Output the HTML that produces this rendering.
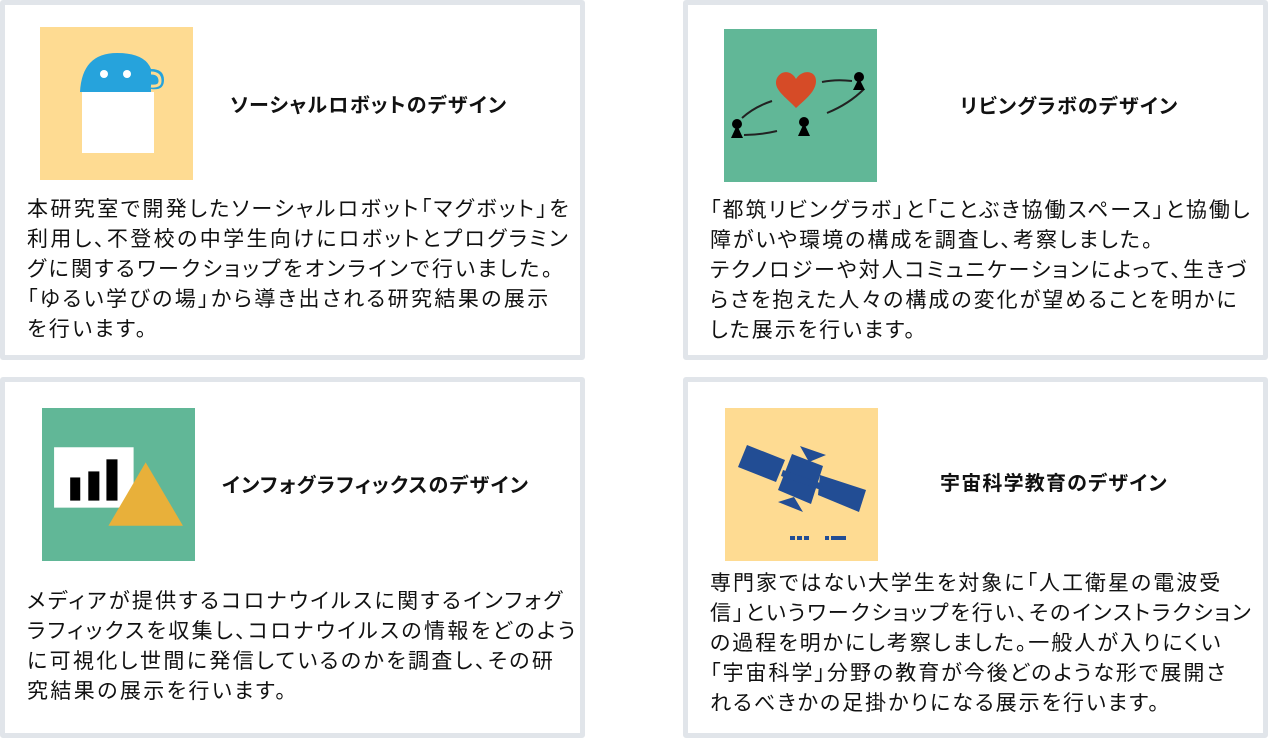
<!DOCTYPE html>
<html><head><meta charset="utf-8"><style>
body{margin:0;width:1268px;height:738px;background:#fff;position:relative;overflow:hidden;font-family:"Liberation Sans","Noto Sans CJK JP",sans-serif;color:#111}
.card{position:absolute;box-sizing:border-box;border:5px solid #e1e5ea;border-radius:3px;background:#fff}
.img{position:absolute;width:153px;height:153px}
.t{position:absolute;font-weight:bold;font-size:20px;letter-spacing:1.2px;white-space:nowrap;line-height:24px;font-feature-settings:"palt"}
.b{position:absolute;font-size:21px;letter-spacing:2.4px;line-height:30px;white-space:nowrap;font-feature-settings:"palt"}
</style></head><body>
<div class="card" style="left:0;top:0;width:585px;height:360px"></div>
<div class="card" style="left:683px;top:0;width:585px;height:360px"></div>
<div class="card" style="left:0;top:377px;width:585px;height:361px"></div>
<div class="card" style="left:683px;top:377px;width:585px;height:361px"></div>

<svg class="img" style="left:40px;top:27px" viewBox="0 0 153 153"><rect width="153" height="153" fill="#fedb92"/><path d="M40 65 Q42 26 77 26 Q105 26 111 42 Q124 42 124 53 Q124 64 111 62 L111 65 Z" fill="#26a3dc"/><path d="M111 46 Q120 46 120 54 Q120 60 111 59" fill="none" stroke="#fedb92" stroke-width="3"/><circle cx="64" cy="47" r="4" fill="#fff"/><circle cx="87" cy="47" r="4" fill="#fff"/><rect x="42" y="65" width="72" height="61" fill="#fff"/></svg>
<div class="t" style="left:230px;top:94px">ソーシャルロボットのデザイン</div>
<div class="b" style="left:27px;top:195px">本研究室で開発したソーシャルロボット「マグボット」を<br>利用し、不登校の中学生向けにロボットとプログラミン<br>グに関するワークショップをオンラインで行いました。<br>「ゆるい学びの場」から導き出される研究結果の展示<br>を行います。</div>

<svg class="img" style="left:724px;top:29px" viewBox="0 0 153 153"><rect width="153" height="153" fill="#61b797"/><path d="M72 79 C62 68 48 60 53 49 C58 40 68 42 72 50 C78 40 92 41 92 52 C92 62 82 70 72 79Z" fill="#d64b27"/><path d="M18 89 Q30 78 48 72 M20 106 Q36 106 53 102 M98 53 Q112 50 128 52 M103 84 Q125 75 140 60" fill="none" stroke="#222" stroke-width="2"/><g fill="#000"><circle cx="13" cy="95" r="5"/><path d="M13 96 L7 109 L19 109Z"/><circle cx="80" cy="93" r="5"/><path d="M80 94 L74 107 L86 107Z"/><circle cx="135" cy="48" r="5"/><path d="M135 49 L129 61 L141 61Z"/></g></svg>
<div class="t" style="left:960px;top:95px">リビングラボのデザイン</div>
<div class="b" style="left:710px;top:196px;letter-spacing:2.0px">「都筑リビングラボ」と「ことぶき協働スペース」と協働し<br>障がいや環境の構成を調査し、考察しました。<br>テクノロジーや対人コミュニケーションによって、生きづ<br>らさを抱えた人々の構成の変化が望めることを明かに<br>した展示を行います。</div>

<svg class="img" style="left:42px;top:408px" viewBox="0 0 152 152"><rect width="152" height="152" fill="#61b797"/><rect x="12" y="39" width="79" height="60" fill="#fff"/><rect x="28" y="69" width="10" height="23" fill="#000"/><rect x="46" y="63" width="11" height="29" fill="#000"/><rect x="64" y="51" width="11" height="41" fill="#000"/><path d="M103 54 L140 117 L66 117Z" fill="#e8b03a"/></svg>
<div class="t" style="left:222px;top:474px">インフォグラフィックスのデザイン</div>
<div class="b" style="left:27px;top:587px">メディアが提供するコロナウイルスに関するインフォグ<br>ラフィックスを収集し、コロナウイルスの情報をどのよう<br>に可視化し世間に発信しているのかを調査し、その研<br>究結果の展示を行います。</div>

<svg class="img" style="left:725px;top:408px" viewBox="0 0 153 153"><rect width="153" height="153" fill="#fedb92"/><g fill="#224d94"><path d="M13 59 L22 37 L60 52 L51 74Z"/><path d="M67 46 L98 58 L86 96 L53 82Z"/><path d="M95 67 L141 82 L134 104 L93 87Z"/><path d="M58 62 L98 76 L96 82 L56 68Z"/><path d="M75 38 L101 47 L84 54Z"/><path d="M53 94 L78 104 L69 89Z"/></g><g fill="#224d94"><rect x="65" y="128" width="5" height="4"/><rect x="72" y="128" width="5" height="4"/><rect x="79" y="128" width="5" height="4"/><rect x="100" y="128" width="4" height="4"/><rect x="106" y="128" width="15" height="4"/></g></svg>
<div class="t" style="left:940px;top:472px">宇宙科学教育のデザイン</div>
<div class="b" style="left:710px;top:569px;letter-spacing:2.0px">専門家ではない大学生を対象に「人工衛星の電波受<br>信」というワークショップを行い、そのインストラクション<br>の過程を明かにし考察しました。一般人が入りにくい<br>「宇宙科学」分野の教育が今後どのような形で展開さ<br>れるべきかの足掛かりになる展示を行います。</div>
</body></html>
